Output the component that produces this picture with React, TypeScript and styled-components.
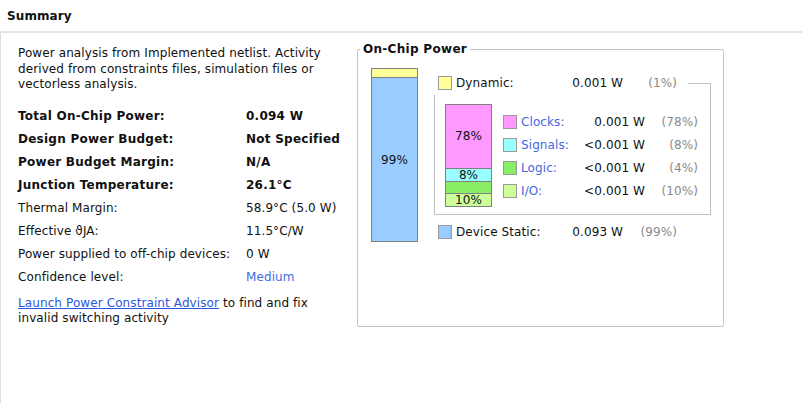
import React from "react";
import styled, { createGlobalStyle } from "styled-components";

const Global = createGlobalStyle`
  html, body { margin: 0; padding: 0; background: #ffffff; }
  body {
    font-family: "DejaVu Sans", Verdana, sans-serif;
    font-size: 12px;
    letter-spacing: 0.1px;
    color: #111111;
  }
`;

const Page = styled.div`
  width: 802px;
  height: 403px;
  display: flex;
  flex-direction: column;
  overflow: hidden;
`;

const Header = styled.div`
  height: 31px;
  display: flex;
  align-items: center;
  padding-left: 7px;
  font-weight: bold;
  font-size: 12px;
  letter-spacing: 0.1px;
  color: #111;
  border-bottom: 2px solid #e4e4e4;
`;

const Body = styled.div`
  flex: 1;
  display: flex;
  border-left: 1px solid #dedede;
  padding-left: 17px;
`;

const LeftCol = styled.div`
  width: 339px;
  padding-top: 13px;
  display: flex;
  flex-direction: column;
`;

const Para = styled.p`
  margin: 0;
  line-height: 15.5px;
  width: 330px;
`;

const InfoGrid = styled.div`
  display: grid;
  grid-template-columns: 228px auto;
  grid-auto-rows: 23px;
  align-items: center;
  margin-top: 12px;
  margin-bottom: 7px;
`;

const Cell = styled.div<{ $bold?: boolean; $link?: boolean }>`
  font-weight: ${(p) => (p.$bold ? "bold" : "normal")};
  letter-spacing: ${(p) => (p.$bold ? "0.25px" : "0.1px")};
  color: ${(p) => (p.$link ? "#3f6be0" : "#111")};
  white-space: nowrap;
`;

const Link = styled.a`
  color: #2a57e0;
  text-decoration: underline;
`;

const Panel = styled.div`
  position: relative;
  margin-top: 16px;
  width: 367px;
  height: 278px;
  border: 1px solid #c4c4c4;
  border-radius: 2px;
  display: flex;
  align-items: flex-start;
  padding: 18px 0 0 13px;
  box-sizing: border-box;
`;

const PanelTitle = styled.div`
  position: absolute;
  top: -8px;
  left: 2px;
  padding: 0 3px;
  background: #fff;
  font-weight: bold;
  letter-spacing: 0.3px;
  line-height: 15px;
`;

const Bar = styled.div<{ $h: number }>`
  width: 47px;
  height: ${(p) => p.$h}px;
  border: 1px solid #808080;
  box-sizing: border-box;
  display: flex;
  flex-direction: column;
  flex-shrink: 0;
`;

const Seg = styled.div<{ $c: string; $h?: number; $last?: boolean }>`
  background: ${(p) => p.$c};
  ${(p) => (p.$h !== undefined ? `height: ${p.$h}px;` : "flex: 1;")}
  border-bottom: ${(p) => (p.$last ? "none" : "1px solid #808080")};
  display: flex;
  align-items: center;
  justify-content: center;
  line-height: 12px;
  color: #111;
`;

const Breakdown = styled.div`
  margin-left: 16px;
  padding-top: 8px;
  display: flex;
  flex-direction: column;
`;

const TopRow = styled.div<{ $h: number }>`
  display: flex;
  align-items: flex-start;
  height: ${(p) => p.$h}px;
  padding-left: 4px;
`;

const Swatch = styled.div<{ $c: string }>`
  width: 14px;
  height: 14px;
  box-sizing: border-box;
  border: 1px solid #9a9a9a;
  background: ${(p) => p.$c};
  flex-shrink: 0;
`;

const Label = styled.div<{ $w: number; $link?: boolean }>`
  width: ${(p) => p.$w}px;
  padding-left: 4px;
  box-sizing: border-box;
  line-height: 14px;
  color: ${(p) => (p.$link ? "#4468e0" : "#111")};
  white-space: nowrap;
`;

const Value = styled.div<{ $w: number }>`
  width: ${(p) => p.$w}px;
  text-align: right;
  line-height: 14px;
  white-space: nowrap;
  color: #111;
`;

const Pct = styled.div<{ $w: number }>`
  width: ${(p) => p.$w}px;
  text-align: right;
  line-height: 14px;
  white-space: nowrap;
  color: #8a8a8a;
`;

const Connector = styled.div`
  margin-left: 11px;
  margin-top: 7px;
  width: 23px;
  height: 12px;
  box-sizing: border-box;
  border-top: 1px solid #c0c0c0;
  border-right: 1px solid #c0c0c0;
`;

const Group = styled.div`
  width: 277px;
  box-sizing: border-box;
  border: 1px solid #c0c0c0;
  border-top: none;
  padding: 9px 12px 7px 10px;
  display: flex;
  align-items: flex-start;
`;

const Rows = styled.div`
  margin-left: 11px;
  margin-top: 6px;
  display: flex;
  flex-direction: column;
`;

const Row = styled.div`
  display: flex;
  align-items: center;
  height: 23px;
`;

const StaticRow = styled(TopRow)`
  margin-top: 10px;
`;

const groupItems = [
  { c: "#ff99ff", name: "Clocks:", v: "0.001 W", p: "(78%)" },
  { c: "#99ffff", name: "Signals:", v: "<0.001 W", p: "(8%)" },
  { c: "#88ee66", name: "Logic:", v: "<0.001 W", p: "(4%)" },
  { c: "#ccff99", name: "I/O:", v: "<0.001 W", p: "(10%)" },
];

const info: { k: string; v: string; bold?: boolean; link?: boolean }[] = [
  { k: "Total On-Chip Power:", v: "0.094 W", bold: true },
  { k: "Design Power Budget:", v: "Not Specified", bold: true },
  { k: "Power Budget Margin:", v: "N/A", bold: true },
  { k: "Junction Temperature:", v: "26.1°C", bold: true },
  { k: "Thermal Margin:", v: "58.9°C (5.0 W)" },
  { k: "Effective \u03D1JA:", v: "11.5°C/W" },
  { k: "Power supplied to off-chip devices:", v: "0 W" },
  { k: "Confidence level:", v: "Medium", link: true },
];

export default function App() {
  return (
    <Page>
      <Global />
      <Header>Summary</Header>
      <Body>
        <LeftCol>
          <Para>
            Power analysis from Implemented netlist. Activity derived from
            constraints files, simulation files or vectorless analysis.
          </Para>
          <InfoGrid>
            {info.map((r) => (
              <React.Fragment key={r.k}>
                <Cell $bold={r.bold}>{r.k}</Cell>
                <Cell $bold={r.bold} $link={r.link}>
                  {r.v}
                </Cell>
              </React.Fragment>
            ))}
          </InfoGrid>
          <Para>
            <Link href="#">Launch Power Constraint Advisor</Link> to find and
            fix
            <br />
            invalid switching activity
          </Para>
        </LeftCol>
        <Panel>
          <PanelTitle>On-Chip Power</PanelTitle>
          <Bar $h={174}>
            <Seg $c="#ffff99" $h={8} />
            <Seg $c="#99ccff" $last>
              99%
            </Seg>
          </Bar>
          <Breakdown>
            <TopRow $h={19}>
              <Swatch $c="#ffff99" />
              <Label $w={100}>Dynamic:</Label>
              <Value $w={71}>0.001 W</Value>
              <Pct $w={54}>(1%)</Pct>
              <Connector />
            </TopRow>
            <Group>
              <Bar $h={103}>
                <Seg $c="#ff99ff" $h={64}>
                  78%
                </Seg>
                <Seg $c="#99ffff" $h={13}>
                  8%
                </Seg>
                <Seg $c="#88ee66" $h={11} />
                <Seg $c="#ccff99" $last>
                  10%
                </Seg>
              </Bar>
              <Rows>
                {groupItems.map((g) => (
                  <Row key={g.name}>
                    <Swatch $c={g.c} />
                    <Label $w={60} $link>
                      {g.name}
                    </Label>
                    <Value $w={68}>{g.v}</Value>
                    <Pct $w={53}>{g.p}</Pct>
                  </Row>
                ))}
              </Rows>
            </Group>
            <StaticRow $h={14}>
              <Swatch $c="#99ccff" />
              <Label $w={100}>Device Static:</Label>
              <Value $w={71}>0.093 W</Value>
              <Pct $w={54}>(99%)</Pct>
            </StaticRow>
          </Breakdown>
        </Panel>
      </Body>
    </Page>
  );
}
